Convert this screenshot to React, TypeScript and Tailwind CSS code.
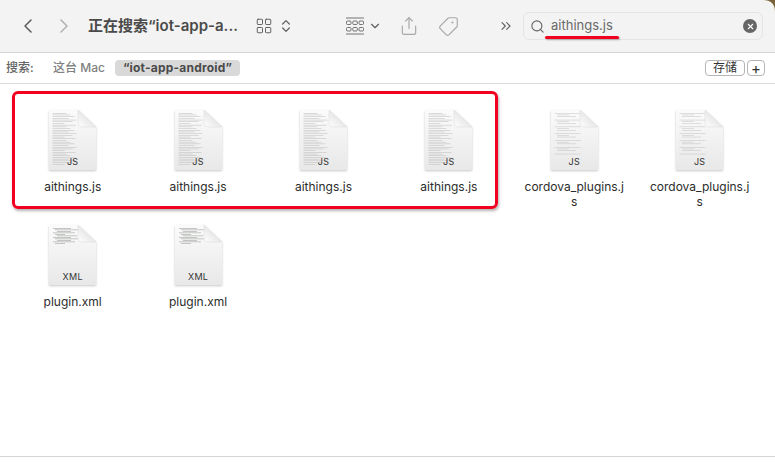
import * as React from 'react'
import { ChevronLeft, ChevronRight, ChevronDown, ChevronsUpDown, LayoutGrid, Share, Tag, ChevronsRight, Search, X } from 'lucide-react'

const font = "font-['Inter','Liberation_Sans','Noto_Sans_CJK_SC',sans-serif]"

function FileIcon({ kind, label }: { kind: 'dense' | 'sparse' | 'xml'; label: string }) {
  const lines: React.ReactNode[] = []
  if (kind === 'dense') {
    for (let i = 0; i < 31; i++) {
      const w = [14, 18, 22, 16, 24, 20, 12, 23][i % 8]
      lines.push(<rect key={i} x="3.5" y={3 + i * 1.7} width={w} height="0.5" fill="#bdbdbd" />)
    }
  } else if (kind === 'sparse') {
    for (let i = 0; i < 25; i++) {
      if (i % 4 === 3) continue
      const w = [26, 12, 19][i % 4] ?? 10
      lines.push(<rect key={i} x={i % 4 === 0 ? 3.5 : 6} y={3 + i * 1.7} width={w} height="0.5" fill="#c2c2c2" />)
    }
  } else {
    for (let i = 0; i < 11; i++) {
      const w = [18, 25, 14, 22, 10, 20][i % 6]
      lines.push(<rect key={i} x={4 + (i % 3) * 2} y={3 + i * 1.5} width={w} height="0.7" fill="#adb1ad" />)
    }
  }
  return (
    <div className="relative h-[60px] w-[47px]">
      <svg width="47" height="60" viewBox="0 0 47 60" className="drop-shadow-[0_1px_1px_rgba(0,0,0,0.22)]">
        <defs>
          <linearGradient id="page" x1="0" y1="0" x2="0" y2="1">
            <stop offset="0" stopColor="#fbfbfb" />
            <stop offset="1" stopColor="#e8e8e8" />
          </linearGradient>
          <linearGradient id="fold" x1="0" y1="1" x2="1" y2="0">
            <stop offset="0" stopColor="#ffffff" />
            <stop offset="1" stopColor="#d2d2d2" />
          </linearGradient>
        </defs>
        <path d="M0 0H29L47 17V60H0Z" fill="url(#page)" />
        {lines}
        <path d="M29 0L47 17H33Q29 17 29 13Z" fill="url(#fold)" stroke="#dadada" strokeWidth="0.5" />
      </svg>
      <span className={`absolute left-0 right-0 top-[46px] text-center text-[9px] leading-[11px] text-[#333] tracking-[0.3px] ${font}`}>
        {label}
      </span>
    </div>
  )
}

function FileItem({ name, kind, label }: { name: string; kind: 'dense' | 'sparse' | 'xml'; label: string }) {
  return (
    <div className="flex flex-col items-center">
      <FileIcon kind={kind} label={label} />
      <div className={`mt-[9px] w-[104px] break-all text-center text-[12px] leading-[15px] text-[#2b2b2b] ${font}`}>{name}</div>
    </div>
  )
}

export default function App() {
  return (
    <div className={`relative h-[462px] w-[775px] overflow-hidden bg-white ${font}`}>
      {/* Toolbar */}
      <div className="flex h-[53px] items-center border-b border-[#d4d4d4] bg-[#f3f3f3] pl-[16px]">
        <ChevronLeft className="h-[24px] w-[24px] text-[#5a5a5a]" strokeWidth={1.5} />
        <ChevronRight className="ml-[12px] h-[24px] w-[24px] text-[#b0b0b0]" strokeWidth={1.5} />
        <span className="ml-[12px] w-[167px] text-[15px] font-semibold text-[#4a4a4a] whitespace-nowrap">正在搜索“iot-app-a...</span>
        <LayoutGrid className="h-[18px] w-[18px] text-[#5f5f5f]" strokeWidth={1.3} />
        <ChevronsUpDown className="ml-[5px] h-[16px] w-[16px] text-[#5f5f5f]" strokeWidth={1.8} />
        <svg width="18" height="18" viewBox="0 0 18 18" className="ml-[52px] text-[#666]" fill="none" stroke="currentColor" strokeWidth="0.9">
          <path d="M0 1H18M0 17H18" />
          <rect x="0.5" y="4" width="4.5" height="3.5" rx="1" />
          <rect x="6.8" y="4" width="4.5" height="3.5" rx="1" />
          <rect x="13" y="4" width="4.5" height="3.5" rx="1" />
          <rect x="0.5" y="10.5" width="4.5" height="3.5" rx="1" />
          <rect x="6.8" y="10.5" width="4.5" height="3.5" rx="1" />
          <rect x="13" y="10.5" width="4.5" height="3.5" rx="1" />
        </svg>
        <ChevronDown className="ml-[4px] h-[14px] w-[14px] text-[#5f5f5f]" strokeWidth={2} />
        <Share className="ml-[17px] h-[20px] w-[20px] text-[#a8a8a8]" strokeWidth={1.4} />
        <Tag className="ml-[19px] h-[21px] w-[21px] scale-x-[-1] text-[#a8a8a8]" strokeWidth={1.3} />
        <ChevronsRight className="ml-[39px] h-[16px] w-[16px] text-[#5f5f5f]" strokeWidth={1.6} />
        <div className="ml-[9px] flex h-[28px] w-[240px] items-center rounded-[6px] border border-[#e4e4e4] bg-[#f3f3f3] pl-[6px] pr-[5px]">
          <Search className="h-[15px] w-[15px] text-[#666]" strokeWidth={1.8} />
          <span className="ml-[6px] flex-1 text-[13px] text-[#6a6a6a]">aithings.js</span>
          <span className="flex h-[14px] w-[14px] items-center justify-center rounded-full bg-[#666]">
            <X className="h-[9px] w-[9px] text-white" strokeWidth={3} />
          </span>
        </div>
      </div>

      {/* Search scope */}
      <div className="flex h-[31px] items-center border-b border-[#dcdcdc] pl-[6px] pr-[10px] text-[12px]">
        <span className="w-[36px] font-medium text-[#666]">搜索:</span>
        <span className="ml-[11px] font-medium text-[#808080]">这台 Mac</span>
        <span className="ml-[10px] flex h-[16px] items-center rounded-[4px] bg-[#d9d9d9] px-[8px] font-bold tracking-[0.2px] text-[#4a4a4a]">“iot-app-android”</span>
        <div className="ml-auto flex items-center gap-[2px]">
          <span className="flex h-[16px] w-[40px] items-center justify-center rounded-[4px] border border-[#b5b5b5] text-[#333]">存储</span>
          <span className="flex h-[16px] w-[18px] items-center justify-center rounded-[4px] border border-[#b5b5b5] text-[15px] leading-none text-[#333]">+</span>
        </div>
      </div>

      {/* Results */}
      <div className="grid grid-cols-[repeat(6,125.4px)] gap-y-[16px] pl-[10px] pt-[26px]">
        <FileItem name="aithings.js" kind="dense" label="JS" />
        <FileItem name="aithings.js" kind="dense" label="JS" />
        <FileItem name="aithings.js" kind="dense" label="JS" />
        <FileItem name="aithings.js" kind="dense" label="JS" />
        <FileItem name="cordova_plugins.js" kind="sparse" label="JS" />
        <FileItem name="cordova_plugins.js" kind="sparse" label="JS" />
        <FileItem name="plugin.xml" kind="xml" label="XML" />
        <FileItem name="plugin.xml" kind="xml" label="XML" />
      </div>

      {/* Annotations */}
      <div className="absolute left-[12px] top-[91px] h-[118px] w-[486px] rounded-[6px] border-[3px] border-[#f2001f] shadow-[1px_2px_3px_rgba(0,0,0,0.3)]" />
      <div className="absolute left-[545px] top-[36px] h-[3px] w-[74px] rounded-full bg-[#f2001f] shadow-[1px_1px_2px_rgba(0,0,0,0.3)]" />

      {/* Window corner */}
      <svg width="12" height="12" viewBox="0 0 12 12" className="absolute right-0 top-0">
        <path d="M0 0H12V12Q12 0 0 0Z" fill="#7a6238" />
      </svg>

      <div className="absolute bottom-[5px] left-0 right-0 h-px bg-[#d4d4d4]" />
    </div>
  )
}
